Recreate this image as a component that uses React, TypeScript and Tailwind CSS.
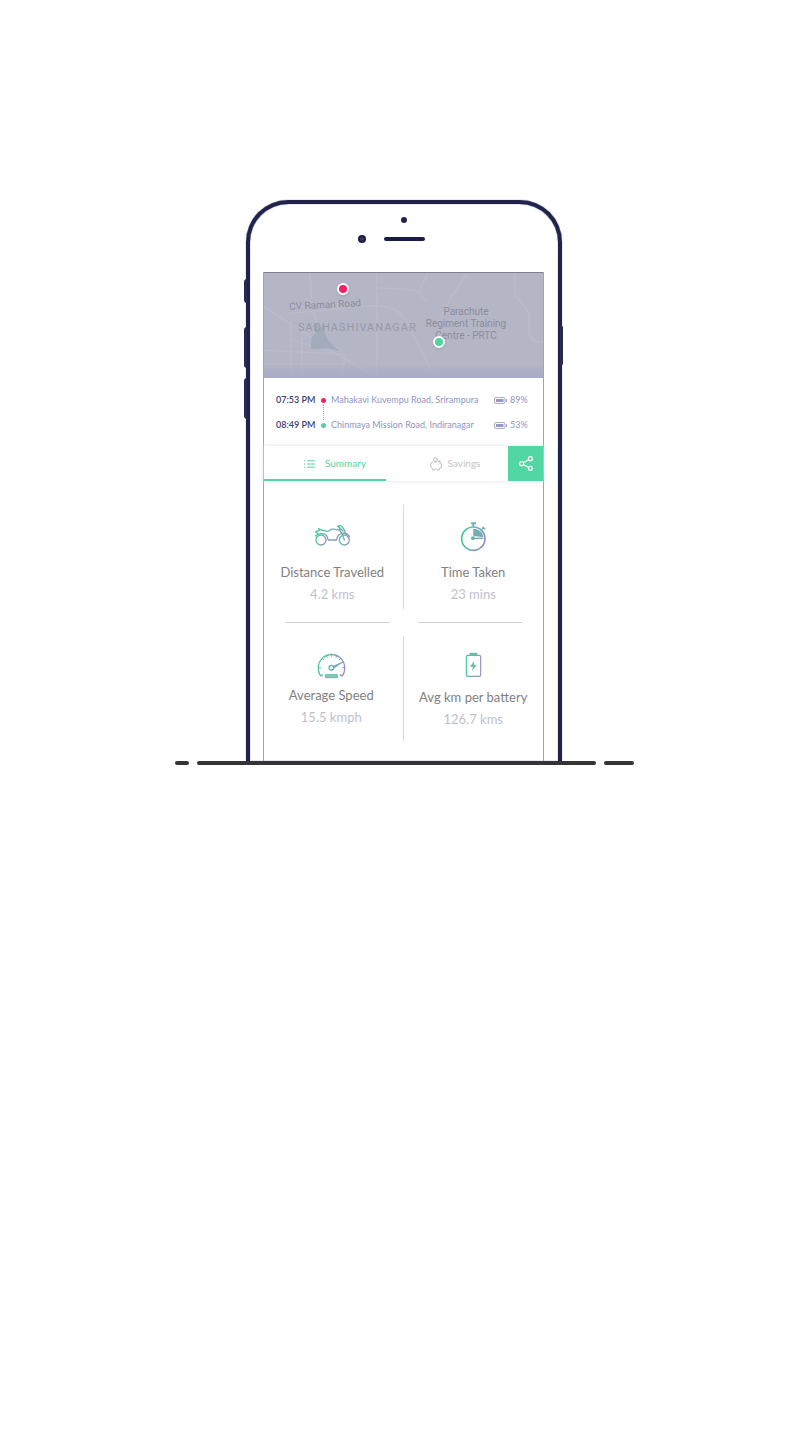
import React, { useState } from 'react';

function Gradient({ id }: { id: string }) {
  return (
    <defs>
      <linearGradient id={id} x1="0" y1="0" x2="1" y2="0.25">
        <stop offset="0" stopColor="#35d396" />
        <stop offset="0.5" stopColor="#6fb3b0" />
        <stop offset="1" stopColor="#8f92c4" />
      </linearGradient>
    </defs>
  );
}

function MotorcycleIcon() {
  return (
    <svg aria-hidden="true" width="37" height="24" viewBox="162 86 111 72" fill="none" stroke="url(#moto)" strokeWidth="4" strokeLinejoin="round" strokeLinecap="round">
      <Gradient id="moto" />
      <circle cx="183" cy="137" r="15" />
      <circle cx="253" cy="137" r="15" />
      <path d="M183 137H201" />
      <path d="M167 125C173 117 192 114 200 124C204 129 204 137 204 137H230C231 126 237 119 246 117L238 107C229 106 219 103 213 105C209 111 201 112 194 109C188 107 181 108 176 103L178 109L167 112L173 118" />
      <path d="M238 107L240 101L233 96C238 93 245 94 248 99L254 109L257 117M246 117C256 116 264 119 268 126M240 101L249 110M246 117L253 137" />
    </svg>
  );
}

function StopwatchIcon() {
  return (
    <svg aria-hidden="true" width="27" height="30" viewBox="603 81 81 90" fill="none" stroke="url(#watch)" strokeWidth="5">
      <Gradient id="watch" />
      <circle cx="643" cy="131" r="35" />
      <path d="M636 85H651M643 85V94" strokeWidth="6" />
      <path d="M666 106L674 98M670 95L679 103" strokeWidth="4" />
      <path d="M643 101C660 101 672 112 673 127L643 123Z" fill="#74adb3" stroke="none" />
      <path d="M643 130H673" strokeWidth="4" stroke="#79a9b5" />
      <circle cx="642" cy="130" r="6" fill="#62bba9" stroke="none" />
    </svg>
  );
}

function SpeedometerIcon() {
  return (
    <svg aria-hidden="true" width="29" height="26" viewBox="171 474 87 78" fill="none" stroke="url(#speed)" strokeWidth="4" strokeLinecap="round">
      <Gradient id="speed" />
      <path d="M183 543C177 537 175 528 175 518A39.500 39.500 0 0 1 254 518C254 528 252 537 246 543L241 539M183 543L188 539" />
      <path d="M176 518H182M253 518H248M187 490L191 494M199 482L201 487M214 479V485M230 482L228 487M242 490L238 494" strokeWidth="3" />
      <circle cx="214" cy="518" r="7" />
      <path d="M221 513L250 500L222 519" fill="#7ba8b7" strokeWidth="2.500" />
      <rect x="197" y="539" width="35" height="9" fill="#8ac9ba" stroke="#66b9aa" strokeWidth="3" />
    </svg>
  );
}

function BatteryIcon() {
  return (
    <svg aria-hidden="true" width="17" height="26" viewBox="616 472 51 78" fill="none" stroke="url(#cell)" strokeWidth="3.500">
      <Gradient id="cell" />
      <rect x="620" y="482" width="43" height="63" rx="4" />
      <rect x="630" y="474" width="23" height="8" rx="2" fill="#6fb9ac" stroke="none" />
      <path d="M644 498L631 516H640L637 529L651 510H642Z" fill="#6bb3ad" stroke="none" />
    </svg>
  );
}

function ListIcon() {
  return (
    <svg aria-hidden="true" width="11" height="8" viewBox="0 0 11 8" stroke="currentColor" strokeWidth="1">
      <path d="M0 .8H1.500M3 .8H11M0 4H1.500M3 4H11M0 7.200H1.500M3 7.200H11" />
    </svg>
  );
}

function PiggyIcon() {
  return (
    <svg aria-hidden="true" width="12" height="14" viewBox="0 0 36 42" fill="none" stroke="currentColor" strokeWidth="3.200" strokeLinejoin="round">
      <circle cx="16" cy="8" r="5.500" />
      <path d="M9 14C4 16 2 21 2 25C2 30 4 33 7 35L9 39H14L15 36H21L23 39H28L29 34L34 30V21L30 19V11L23 14M12 15H21" />
      <path d="M25 20V23" />
    </svg>
  );
}

function ShareIcon() {
  return (
    <svg aria-hidden="true" width="14" height="15" viewBox="0 0 42 45" fill="none" stroke="currentColor" strokeWidth="3.500">
      <circle cx="8" cy="23" r="6" />
      <circle cx="34" cy="8" r="6" />
      <circle cx="34" cy="37" r="6" />
      <path d="M13 20L29 11M13 26L29 34" />
    </svg>
  );
}

function ChargeIcon() {
  return (
    <svg aria-hidden="true" width="13" height="7" viewBox="0 0 13 7" fill="none" stroke="#9497c2">
      <rect x=".5" y=".5" width="10.500" height="6" rx="1.500" strokeWidth=".8" />
      <rect x="2" y="2" width="7.500" height="3" fill="#9497c2" stroke="none" />
      <path d="M12.300 2V5" strokeWidth="1" />
    </svg>
  );
}

function TripMap() {
  return (
    <div className="relative h-[106px] overflow-hidden border-t border-[#7d7f8b] bg-[#b5b6c5] font-['Roboto',sans-serif] text-[#8b8d9d]">
      <svg aria-hidden="true" className="absolute inset-0 h-full w-full" viewBox="0 0 280 106" preserveAspectRatio="none" fill="none" stroke="#babbca" strokeWidth="1.500" strokeLinejoin="round">
        <path d="M46 0L49 38L57 62M113 0V105M0 34L25 50L72 81L112 105M24 41L108 33C130 32 142 42 146 54L168 98L173 105M113 15L150 17C158 19 156 28 164 27M164 0C162 10 154 14 158 22M204 0L188 24L178 44M252 0V18C252 28 264 32 266 42V58C267 68 272 70 280 70" />
        <path d="M27 48V105M38 58V105M0 78L82 82M0 92H80M26 67L72 81M82 82L78 105" />
        <path d="M47 77L48 64L52 61L49 53L54 50L56 57L60 51L61 61L64 68L76 79L64 76Z" fill="#a2abb9" stroke="none" />
      </svg>
      <div className="absolute inset-x-0 bottom-0 h-4 bg-linear-to-b from-transparent to-[#a8a9c8]" />
      <span className="absolute top-[26px] left-[25px] -rotate-3 text-[10px] leading-3 whitespace-nowrap">CV Raman Road</span>
      <span className="absolute top-[49px] left-[34px] text-[11px] leading-3 tracking-[1px] whitespace-nowrap text-[#9698a7]">SADHASHIVANAGAR</span>
      <span className="absolute top-[33px] left-[152px] w-[100px] text-center text-[10px] leading-3">
        Parachute
        <br />
        Regiment Training
        <br />
        Centre - PRTC
      </span>
      <span className="absolute top-[10px] left-[73px] size-3 rounded-full border-2 border-white bg-[#fd1e67] shadow-sm" />
      <span className="absolute top-[63px] left-[169px] size-3 rounded-full border-2 border-white bg-[#4fd3a2] shadow-sm" />
    </div>
  );
}

const stops = [
  { time: '07:53 PM', place: 'Mahakavi Kuvempu Road, Srirampura', charge: '89%', dot: 'bg-[#fd1e67]' },
  { time: '08:49 PM', place: 'Chinmaya Mission Road, Indiranagar', charge: '53%', dot: 'bg-[#4fd3a2]' },
];

function Stops() {
  return (
    <ul className="relative flex flex-col gap-[13px] px-3 pt-4 pb-[15px] text-[9px] leading-3 text-[#9194bf]">
      <li aria-hidden="true" className="absolute top-[26px] left-[59px] h-[16px] border-l border-dotted border-[#aaaabb]" />
      {stops.map((s) => (
        <li key={s.time} className="flex items-center whitespace-nowrap">
          <span className="w-[45px] font-semibold text-[#3c3e70]">{s.time}</span>
          <span className={`size-[5px] rounded-full ${s.dot}`} />
          <span className="ml-[5px] flex-1">{s.place}</span>
          <ChargeIcon />
          <span className="ml-[3px] w-[21px]">{s.charge}</span>
        </li>
      ))}
    </ul>
  );
}

function Tabs() {
  const [tab, setTab] = useState('summary');
  return (
    <div className="grid h-[35px] grid-cols-[1fr_1fr_35px] text-[10px] shadow-[0_0_5px_#dfe1ee]">
      <button
        type="button"
        aria-pressed={tab === 'summary'}
        onClick={() => setTab('summary')}
        className={`flex items-center justify-center gap-[10px] border-b-2 pt-[2px] pl-5 ${tab === 'summary' ? 'border-[#52d6a4] text-[#52d6a4]' : 'border-transparent text-[#c3c3c8]'}`}
      >
        <ListIcon />
        Summary
      </button>
      <button
        type="button"
        aria-pressed={tab === 'savings'}
        onClick={() => setTab('savings')}
        className={`flex items-center justify-center gap-[6px] border-b-2 pt-[2px] pl-4 ${tab === 'savings' ? 'border-[#52d6a4] text-[#52d6a4]' : 'border-transparent text-[#c3c3c8]'}`}
      >
        <PiggyIcon />
        Savings
      </button>
      <button type="button" aria-label="Share" className="flex items-center justify-center bg-[#52d6a4] text-white">
        <ShareIcon />
      </button>
    </div>
  );
}

function Stat({ icon, label, value, className }: { icon: React.ReactNode; label: string; value: string; className: string }) {
  return (
    <div className={`flex flex-col items-center whitespace-nowrap text-[13px] leading-[22px] ${className}`}>
      {icon}
      <span className="text-[#818181]">{label}</span>
      <span className="text-[#c0c0cd]">{value}</span>
    </div>
  );
}

function Stats() {
  return (
    <div className="pt-6 pb-5">
      <div className="grid h-[104px] grid-cols-2">
        <Stat className="justify-end border-r border-[#d8d8da] pr-[2px] pb-1 [&>svg]:mb-[14px]" icon={<MotorcycleIcon />} label="Distance Travelled" value="4.2 kms" />
        <Stat className="justify-end pb-1 [&>svg]:mb-[9px]" icon={<StopwatchIcon />} label="Time Taken" value="23 mins" />
      </div>
      <div className="flex h-[27px] items-center gap-7 px-[21px]">
        <hr className="flex-1 border-[#d2d2d4]" />
        <hr className="flex-1 border-[#d2d2d4]" />
      </div>
      <div className="grid h-[105px] grid-cols-2">
        <Stat className="justify-start border-r border-[#d8d8da] pt-[17px] pr-1 [&>svg]:mb-[5px]" icon={<SpeedometerIcon />} label="Average Speed" value="15.5 kmph" />
        <Stat className="justify-start pt-4 [&>svg]:mb-2" icon={<BatteryIcon />} label="Avg km per battery" value="126.7 kms" />
      </div>
    </div>
  );
}

export default function App() {
  return (
    <main className="flex min-h-screen flex-col items-center bg-white pt-[200px] pr-[2px] font-['Lato','Liberation_Sans',sans-serif]">
      <div className="relative w-[316px] rounded-t-[42px] border-4 border-b-0 border-[#20244c] pr-[14px] pl-[13px] shadow-[0_0_1px_#30345c,inset_0_0_1px_#10133d]">
        <span className="absolute top-[75px] -left-[6px] h-[24px] w-[3px] rounded-l-sm bg-[#272b50]" />
        <span className="absolute top-[123px] -left-[6px] h-[41px] w-[3px] rounded-l-sm bg-[#272b50]" />
        <span className="absolute top-[174px] -left-[6px] h-[41px] w-[3px] rounded-l-sm bg-[#272b50]" />
        <span className="absolute top-[121px] -right-[5px] h-[41px] w-[3px] rounded-r-sm bg-[#272b50]" />
        <div className="flex h-[68px] flex-col items-center pt-[13px]">
          <span className="size-[6px] rounded-full bg-[#20244c]" />
          <div className="mt-3 flex items-center gap-[18px] pr-[25px]">
            <span className="size-2 rounded-full border-2 border-[#181b45] bg-[#353a60]" />
            <span className="h-1 w-[41px] rounded-full bg-[#181b45]" />
          </div>
        </div>
        <div className="border-x border-[#a2a3ac]">
          <TripMap />
          <Stops />
          <Tabs />
          <Stats />
        </div>
      </div>
      <div className="flex w-[459px] gap-2">
        <span className="h-1 w-[14px] rounded-full bg-[#353535]" />
        <span className="h-1 flex-1 rounded-full bg-[#353535]" />
        <span className="h-1 w-[30px] rounded-full bg-[#353535]" />
      </div>
    </main>
  );
}
